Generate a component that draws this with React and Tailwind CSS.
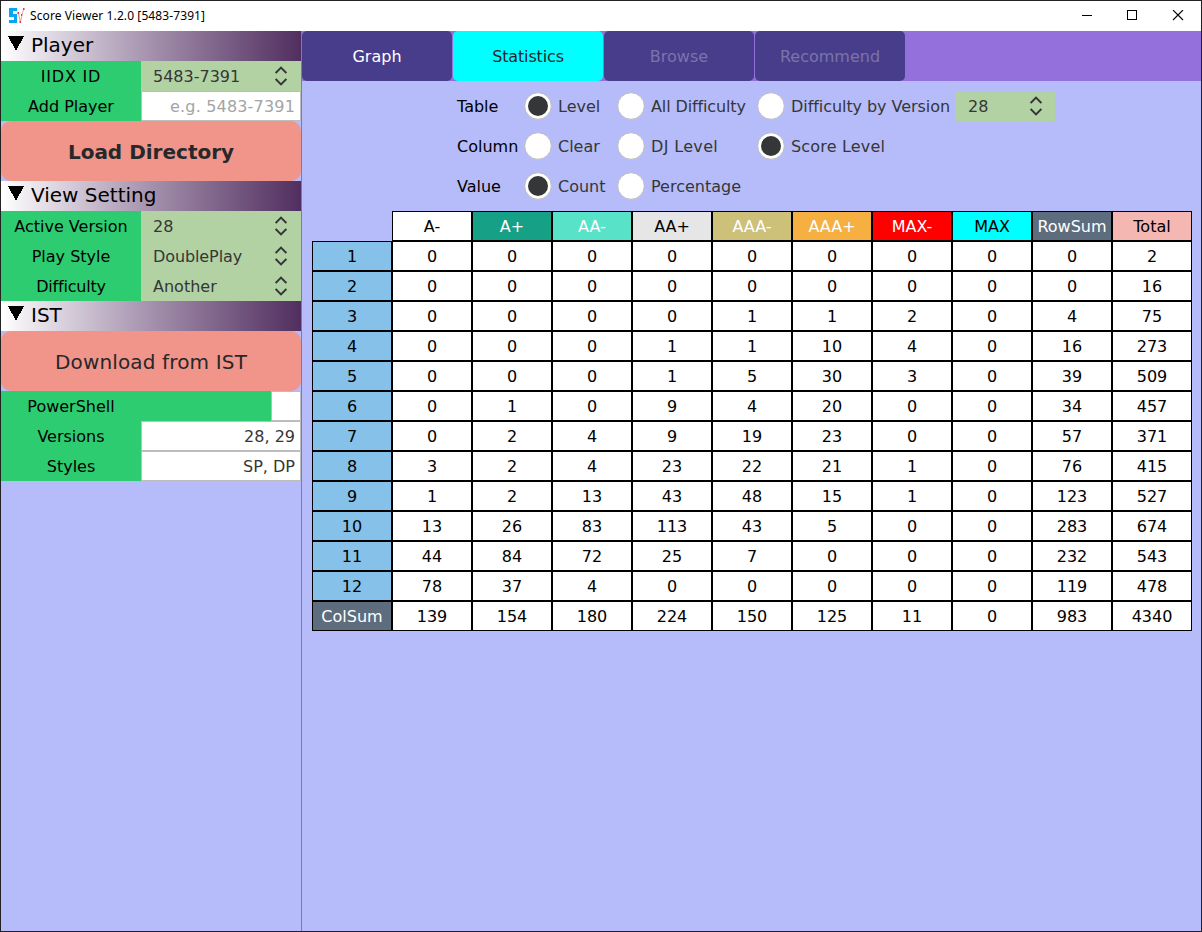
import React from "react";

const COLUMNS = [
  ["A-", "bg-white text-black"],
  ["A+", "bg-[#16a085] text-white"],
  ["AA-", "bg-[#58e2c8] text-white"],
  ["AA+", "bg-[#e6e6e6] text-black"],
  ["AAA-", "bg-[#cdc079] text-white"],
  ["AAA+", "bg-[#f5b041] text-white"],
  ["MAX-", "bg-[#ff0000] text-white"],
  ["MAX", "bg-[#00ffff] text-black"],
  ["RowSum", "bg-[#5d6d7e] text-white"],
  ["Total", "bg-[#f5b7b1] text-black"],
];

const ROWS = [
  ["1", 0, 0, 0, 0, 0, 0, 0, 0, 0, 2],
  ["2", 0, 0, 0, 0, 0, 0, 0, 0, 0, 16],
  ["3", 0, 0, 0, 0, 1, 1, 2, 0, 4, 75],
  ["4", 0, 0, 0, 1, 1, 10, 4, 0, 16, 273],
  ["5", 0, 0, 0, 1, 5, 30, 3, 0, 39, 509],
  ["6", 0, 1, 0, 9, 4, 20, 0, 0, 34, 457],
  ["7", 0, 2, 4, 9, 19, 23, 0, 0, 57, 371],
  ["8", 3, 2, 4, 23, 22, 21, 1, 0, 76, 415],
  ["9", 1, 2, 13, 43, 48, 15, 1, 0, 123, 527],
  ["10", 13, 26, 83, 113, 43, 5, 0, 0, 283, 674],
  ["11", 44, 84, 72, 25, 7, 0, 0, 0, 232, 543],
  ["12", 78, 37, 4, 0, 0, 0, 0, 0, 119, 478],
  ["ColSum", 139, 154, 180, 224, 150, 125, 11, 0, 983, 4340],
];

function Cell({ className, children }) {
  return (
    <div className={"flex h-[30px] w-20 items-center justify-center border border-black pt-[2px] " + className}>
      {children}
    </div>
  );
}

function SectionHeader({ title }) {
  return (
    <div className="flex h-[30px] items-center bg-linear-to-r from-white to-[#512e5f] pl-[7px] text-[20px] text-black">
      <svg width="16" height="15" viewBox="0 0 16 15" className="mb-[5px] mr-[7px]" shapeRendering="crispEdges">
        <path d="M0 0H16L8 15Z" fill="#000" />
      </svg>
      <span className="-mt-[2px]">{title}</span>
    </div>
  );
}

function Label({ children, className = "" }) {
  return (
    <div className={"flex h-[30px] w-[140px] items-center justify-center bg-[#2ecc71] pt-[2px] text-black " + className}>
      {children}
    </div>
  );
}

function Select({ value, className }) {
  return (
    <div className={"flex h-[30px] items-center justify-between bg-[#b2d2a4] text-[#353637] " + className}>
      <span className="pt-[2px]">{value}</span>
      <svg width="12" height="20" viewBox="0 0 12 20" fill="none" stroke="#353637" strokeWidth="2">
        <path d="M0.6 7L6 1.600L11.400 7M0.600 13L6 18.400L11.400 13" />
      </svg>
    </div>
  );
}

function Field({ children, className }) {
  return (
    <div className={"flex h-[30px] items-center justify-end border border-[#bdbdbd] bg-white pr-[5px] pt-[2px] " + className}>
      {children}
    </div>
  );
}

function BigButton({ children, className = "" }) {
  return (
    <div className={"flex h-[60px] items-center justify-center rounded-[10px] bg-[#f1948a] pt-[2px] text-[20px] text-[#26282a] " + className}>
      {children}
    </div>
  );
}

function Radio({ label, checked, className = "" }) {
  return (
    <div className={"flex h-10 items-center gap-[6px] text-[#353637] " + className}>
      <svg width="28" height="28" viewBox="0 0 28 28" className="shrink-0">
        <circle cx="14" cy="14" r="13.3" fill="#fff" stroke="#bdbdbd" />
        {checked && <circle cx="14" cy="14" r="10" fill="#353637" />}
      </svg>
      <span className="whitespace-nowrap pt-[2px]">{label}</span>
    </div>
  );
}

function Tab({ children, className }) {
  return (
    <div className={"flex h-[50px] w-[150px] items-center justify-center rounded-[5px] pt-[2px] " + className}>{children}</div>
  );
}

export default function App() {
  return (
    <div className="flex h-[932px] w-[1202px] flex-col border border-[#222] bg-[#b6bcfa] font-['DejaVu_Sans',Verdana,sans-serif] text-[16px] leading-none">
      <header className="flex h-[30px] shrink-0 items-center bg-white font-['Noto_Sans',sans-serif] text-[12px] text-black">
        <svg width="16" height="16" viewBox="0 0 16 16" className="mb-px ml-2 mr-[5px]">
          <path d="M0 0H8V3H4V6H8V15H0V12H5V9H0Z" fill="#05a8f0" />
          <path d="M9 4L11.500 14L14.500 1" fill="none" stroke="#f3a5a5" strokeWidth="1.100" />
          <path d="M8.500 4h1.500v2H8.500zM10.500 13h1.500v2h-1.500zM12 6h1v2h-1zM14 0h1.500v2H14z" fill="#e23b3b" />
        </svg>
        <span className="flex-1 tracking-[0.1px]">Score Viewer 1.2.0 [5483-7391]</span>
        <svg width="102" height="12" viewBox="0 0 102 12" className="mr-[17px]" fill="none" stroke="#000">
          <path d="M0 5.500H10M45.500 0.500H54.500V9.500H45.500Z" shapeRendering="crispEdges" />
          <path d="M91 0L101 10M101 0L91 10" strokeWidth="1.100" />
        </svg>
      </header>
      <div className="flex min-h-0 flex-1">
        <aside className="w-[301px] shrink-0 border-r border-[#808080]">
          <SectionHeader title="Player" />
          <div className="flex">
            <Label className="tracking-[0.8px]">IIDX ID</Label>
            <Select value="5483-7391" className="flex-1 pl-3 pr-[14px]" />
          </div>
          <div className="flex">
            <Label>Add Player</Label>
            <Field className="flex-1 tracking-[0.18px] text-[#a3a4a5]">e.g. 5483-7391</Field>
          </div>
          <BigButton className="font-bold">Load Directory</BigButton>
          <SectionHeader title="View Setting" />
          <div className="flex"><Label>Active Version</Label><Select value="28" className="flex-1 pl-3 pr-[14px]" /></div>
          <div className="flex"><Label>Play Style</Label><Select value="DoublePlay" className="flex-1 pl-3 pr-[14px] tracking-[-0.1px]" /></div>
          <div className="flex"><Label className="tracking-[-0.2px]">Difficulty</Label><Select value="Another" className="flex-1 pl-3 pr-[14px]" /></div>
          <SectionHeader title="IST" />
          <BigButton className="tracking-[0.15px]">Download from IST</BigButton>
          <div className="flex bg-[#2ecc71]">
            <Label>PowerShell</Label>
            <Field className="ml-auto w-[30px]" />
          </div>
          <div className="flex"><Label>Versions</Label><Field className="flex-1 text-[#353637]">28, 29</Field></div>
          <div className="flex"><Label>Styles</Label><Field className="flex-1 text-[#353637]">SP, DP</Field></div>
        </aside>
        <main className="flex-1">
          <nav className="flex gap-px bg-[#9370db]">
            <Tab className="bg-[#483d8b] text-white">Graph</Tab>
            <Tab className="bg-[#00ffff] tracking-[-0.15px] text-[#26282a]">Statistics</Tab>
            <Tab className="bg-[#483d8b] text-[#7b73aa]">Browse</Tab>
            <Tab className="bg-[#483d8b] text-[#7b73aa]">Recommend</Tab>
          </nav>
          <section className="grid grid-cols-[67px_93px_140px_198px_100px] items-center pb-[5px] pl-[155px] pt-[5px] text-black">
            <span className="pt-[2px]">Table</span>
            <Radio label="Level" checked />
            <Radio label="All Difficulty" className="tracking-[-0.12px]" />
            <Radio label="Difficulty by Version" className="tracking-[-0.06px]" />
            <Select value="28" className="w-[100px] pl-[13px] pr-[13px]" />
            <span className="pt-[2px]">Column</span>
            <Radio label="Clear" />
            <Radio label="DJ Level" className="tracking-[0.35px]" />
            <Radio label="Score Level" checked className="col-span-2 tracking-[0.18px]" />
            <span className="pt-[2px]">Value</span>
            <Radio label="Count" checked />
            <Radio label="Percentage" className="col-span-3" />
          </section>
          <section className="ml-[10px] text-black">
            <div className="flex pl-20">
              {COLUMNS.map(([name, color]) => (
                <Cell key={name} className={color}>{name}</Cell>
              ))}
            </div>
            {ROWS.map(([name, ...values]) => (
              <div key={name} className="flex">
                <Cell className={name === "ColSum" ? "bg-[#5d6d7e] text-white" : "bg-[#85c1e9]"}>{name}</Cell>
                {values.map((value, i) => (
                  <Cell key={i} className="bg-white">{value}</Cell>
                ))}
              </div>
            ))}
          </section>
        </main>
      </div>
    </div>
  );
}
